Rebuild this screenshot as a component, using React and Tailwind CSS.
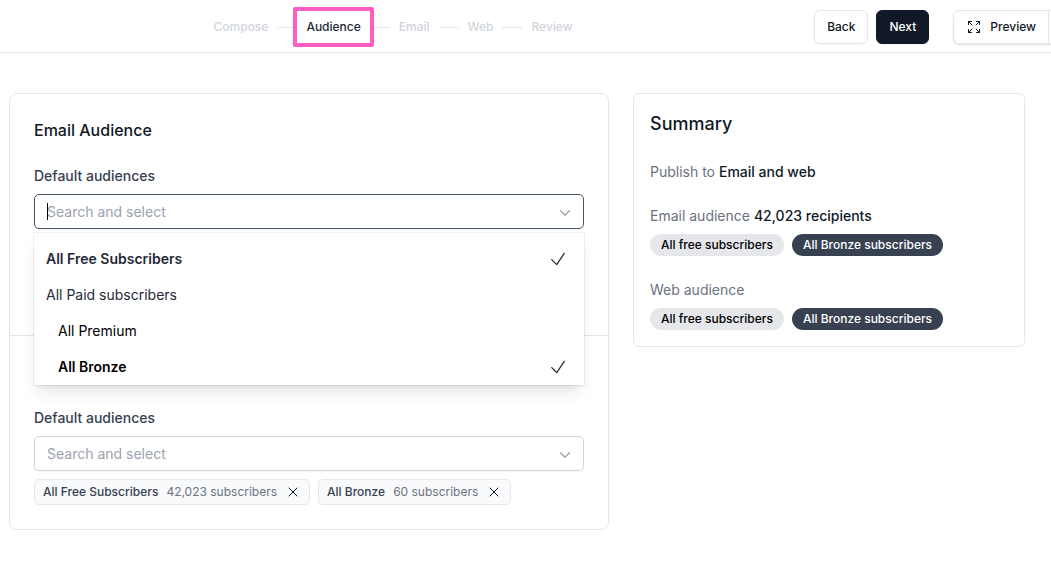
import React from "react";
import {
  HiOutlineArrowsPointingOut,
  HiOutlineCheck,
  HiOutlineChevronDown,
  HiOutlineXMark,
} from "react-icons/hi2";

const steps = ["Compose", "Audience", "Email", "Web", "Review"];

const options = [
  { label: "All Free Subscribers", selected: true, nested: false },
  { label: "All Paid subscribers", selected: false, nested: false },
  { label: "All Premium", selected: false, nested: true },
  { label: "All Bronze", selected: true, nested: true },
];

const chips = [
  { name: "All Free Subscribers", count: "42,023 subscribers" },
  { name: "All Bronze", count: "60 subscribers" },
];

const Steps = ({ active }) => (
  <ol className="flex items-center gap-[9px] text-xs font-medium">
    {steps.map((step, idx) => (
      <li key={step} className="flex items-center gap-[9px]">
        {idx > 0 && <span className="w-5 h-px bg-[#e5e7eb]" />}
        {step === active ? (
          <span className="relative text-[#1f2937]" aria-current="step">
            {step}
            <span className="absolute -inset-x-[13px] -inset-y-3 border-4 border-[#ff5cc4] rounded-xs" />
          </span>
        ) : (
          <span className="text-[#d1d5db]">{step}</span>
        )}
      </li>
    ))}
  </ol>
);

const Header = () => (
  <header className="flex items-center h-[53px] pt-0.5 border-b border-[#e5e7eb] overflow-hidden">
    <nav className="flex-1 flex justify-center" aria-label="Progress">
      <Steps active="Audience" />
    </nav>
    <div className="flex shrink-0 items-center gap-2 ml-7 text-xs font-medium">
      <button type="button" className="h-[34px] px-3 rounded-md border border-[#e5e7eb] bg-white text-[#111827] shadow-xs">
        Back
      </button>
      <button type="button" className="h-[34px] px-3 rounded-md border border-[#111827] bg-[#111827] text-white shadow-xs">
        Next
      </button>
      <div className="flex h-[34px] ml-4 -mr-8 rounded-md border border-[#e5e7eb] bg-white text-[#111827] shadow-sm">
        <button type="button" className="flex items-center gap-2 px-3">
          <HiOutlineArrowsPointingOut className="size-4" />
          Preview
        </button>
        <button type="button" aria-label="More preview options" className="w-[34px] border-l border-[#e5e7eb]" />
      </div>
    </div>
  </header>
);

const Dropdown = () => (
  <ul
    role="listbox"
    aria-label="Default audiences"
    className="absolute z-10 inset-x-0 top-full mt-1 pt-2 bg-white shadow-lg ring-1 ring-black/5 text-sm"
  >
    {options.map((o) => (
      <li key={o.label} role="option" aria-selected={o.selected}>
        <button
          type="button"
          className={`flex w-full h-9 items-center justify-between pr-4 text-left ${
            o.nested ? "pl-6 text-black" : "pl-3 text-[#1f2937]"
          } ${o.selected ? "font-semibold" : "font-normal"}`}
        >
          {o.label}
          {o.selected && <HiOutlineCheck className="size-5 text-[#1f2937]" />}
        </button>
      </li>
    ))}
  </ul>
);

const AudienceField = ({ id, open }) => (
  <div>
    <label htmlFor={id} className="block text-sm font-medium text-[#374151]">
      Default audiences
    </label>
    <div className="relative mt-2">
      <input
        id={id}
        type="text"
        placeholder="Search and select"
        className={`block w-full h-[35px] pl-3 pr-9 rounded-[5px] border bg-white text-sm shadow-xs outline-none placeholder:text-[#9ca3af] ${
          open ? "border-[#475569]" : "border-[#d1d5db]"
        }`}
      />
      {open && <span className="absolute left-[13px] inset-y-[9px] w-px bg-black" />}
      <HiOutlineChevronDown strokeWidth={2.25} className="absolute right-3 top-3 size-3.5 text-[#9ca3af]" />
      {open && <Dropdown />}
    </div>
  </div>
);

const Chip = ({ name, count }) => (
  <li className="flex items-center gap-2 h-[26px] px-2 rounded-[5px] border border-[#e5e7eb] bg-[#f9fafb] text-xs">
    <span className="font-medium text-[#374151]">{name}</span>
    <span className="text-[#6b7280]">{count}</span>
    <button type="button" aria-label={`Remove ${name}`} className="text-[#111827]">
      <HiOutlineXMark className="size-4" />
    </button>
  </li>
);

const Pills = () => (
  <div className="flex flex-wrap gap-2 mt-2 text-xs font-medium">
    <span className="h-[22px] px-[11px] leading-[22px] rounded-full bg-[#e5e7eb] text-black">All free subscribers</span>
    <span className="h-[22px] px-[11px] leading-[22px] rounded-full bg-[#374151] text-white">All Bronze subscribers</span>
  </div>
);

const Summary = () => (
  <aside className="rounded-md border border-[#e5e7eb] p-4 text-sm text-[#6b7280]">
    <h2 className="text-lg font-medium text-[#111827]">Summary</h2>
    <p className="mt-6">
      Publish to <span className="font-medium text-[#111827]">Email and web</span>
    </p>
    <p className="mt-6">
      Email audience <span className="font-medium text-[#111827]">42,023 recipients</span>
    </p>
    <Pills />
    <p className="mt-6">Web audience</p>
    <Pills />
  </aside>
);

export default function App() {
  return (
    <div className="min-h-screen bg-white font-['Inter',sans-serif]">
      <Header />
      <main className="grid grid-cols-[600fr_392fr] items-start gap-6 pt-10 pb-8 pl-[9px] pr-[26px]">
        <div className="rounded-lg border border-[#e5e7eb]">
          <section className="px-6 pt-6 pb-[106px] border-b border-[#e5e7eb]">
            <h2 className="mb-6 text-base font-medium text-[#111827]">Email Audience</h2>
            <AudienceField id="email-audience" open />
          </section>
          <section className="px-6 pt-[72px] pb-6">
            <AudienceField id="web-audience" />
            <ul className="flex flex-wrap gap-2 mt-2">
              {chips.map((c) => (
                <Chip key={c.name} name={c.name} count={c.count} />
              ))}
            </ul>
          </section>
        </div>
        <Summary />
      </main>
    </div>
  );
}
